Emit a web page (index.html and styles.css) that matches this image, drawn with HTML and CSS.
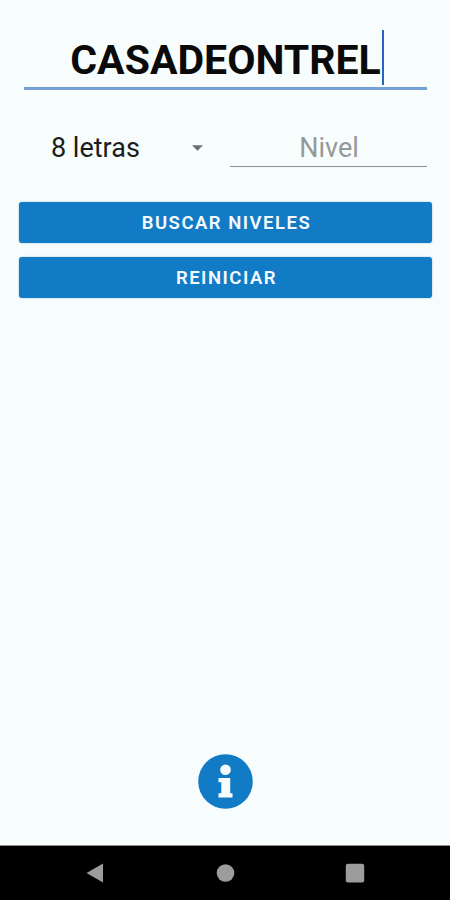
FILE: index.html
```html
<!DOCTYPE html>
<html lang="es">
<head>
  <meta charset="UTF-8">
  <meta name="viewport" content="width=device-width, initial-scale=1.0">
  <title>Buscar niveles</title>
  <link rel="stylesheet" href="styles.css">
</head>
<body>
  <main class="app">
    <div class="letras-field">
      <span class="letras-texto">CASADEONTREL<span class="cursor"></span></span>
    </div>

    <div class="filtros">
      <div class="selector">
        <span>8 letras</span>
        <svg class="flecha" viewBox="0 0 12 6"><path d="M0 0h12L6 6z"/></svg>
      </div>
      <input class="nivel" type="text" placeholder="Nivel">
    </div>

    <div class="botones">
      <button type="button">BUSCAR NIVELES</button>
      <button type="button">REINICIAR</button>
    </div>

    <svg class="info" viewBox="0 0 55 55">
      <circle cx="27.5" cy="27.5" r="27.3" fill="#127bc6"/>
      <circle cx="27.5" cy="15.8" r="5.3" fill="#f7fdfd"/>
      <path d="M20.5 24h11.7v15.2h2.3v4.2H20.5v-4.2h2.8v-11h-2.8z" fill="#f7fdfd"/>
    </svg>
  </main>

  <nav class="barra">
    <svg viewBox="0 0 20 20"><path d="M1.5 10L18 .5v19z"/></svg>
    <svg viewBox="0 0 20 20"><circle cx="10.5" cy="10" r="8.8"/></svg>
    <svg viewBox="0 0 20 20"><rect x=".8" y=".8" width="18.4" height="18.6" rx="2"/></svg>
  </nav>
</body>
</html>
```

FILE: styles.css
```css
* {
  box-sizing: border-box;
}
body {
  font-family: Roboto, sans-serif;
  background-color: #f7fdfd;
  display: flex;
  flex-direction: column;
  height: 100vh;
  margin: 0;
}
.app {
  flex: 1;
  display: flex;
  flex-direction: column;
  padding: 30px 18px 36px 19px;
}

/* Campo de letras */
.letras-field {
  height: 60px;
  margin: 0 5px;
  border-bottom: 3px solid #75a0d5;
  text-align: center;
}
.letras-texto {
  position: relative;
  display: inline-block;
  font-size: 41px;
  font-weight: bold;
  line-height: 60px;
  color: #0a0a0a;
}
.cursor {
  position: absolute;
  top: 0;
  right: -3px;
  width: 2px;
  height: 55px;
  background-color: #2465c0;
}

/* Selector y nivel */
.filtros {
  display: flex;
  height: 77px;
  margin: 0 5px;
}
.selector {
  display: flex;
  align-items: center;
  justify-content: space-between;
  width: 206px;
  height: 58px;
  margin-top: 28px;
  padding: 1px 26px 0 27px;
  font-size: 27px;
  color: #1c1c1c;
}
.flecha {
  width: 11px;
  height: 6px;
  fill: #6c7070;
}
.nivel {
  width: 197px;
  height: 49px;
  margin: 28px 0 0 1px;
  padding: 11px 0 0 1px;
  border: none;
  border-bottom: 1px solid #8c9090;
  background: transparent;
  font-family: inherit;
  font-size: 27px;
  text-align: center;
  outline: none;
}
.nivel::placeholder {
  color: #969999;
}

/* Botones */
.botones {
  display: flex;
  flex-direction: column;
  gap: 14px;
  margin-top: 34.5px;
}
.botones button {
  height: 41px;
  padding: 2px 0 0 2px;
  border: none;
  border-radius: 3px;
  background-color: #127bc6;
  color: #f4faff;
  font-family: inherit;
  font-size: 18.5px;
  font-weight: 600;
  letter-spacing: 1.5px;
  box-shadow: 0 0 2px rgba(18, 80, 140, 0.4);
}

.info {
  width: 55px;
  height: 55px;
  margin: auto auto 0;
}

/* Barra de navegación */
.barra {
  display: flex;
  align-items: center;
  justify-content: space-between;
  height: 55px;
  padding: 0 85px;
  border-top: 1px solid #8a8e8e;
  background-color: #000;
}
.barra svg {
  width: 20px;
  height: 20px;
  fill: #9c9c9c;
}
```
